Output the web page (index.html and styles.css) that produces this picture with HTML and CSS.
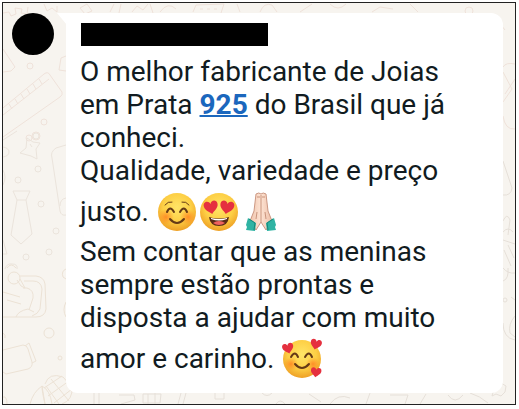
FILE: index.html
```html
<!DOCTYPE html>
<html lang="pt-br">
<head>
    <meta charset="UTF-8">
    <meta name="viewport" content="width=device-width, initial-scale=1">
    <title>Depoimento</title>
    <link rel="stylesheet" href="styles.css">
</head>
<body>
    <main class="chat">
        <!-- desenhos do papel de parede -->
        <svg class="fundo" viewBox="3 3 512 401" preserveAspectRatio="none" aria-hidden="true">
            <g class="rosado">
                <path d="M3 13l6-1 2 4 5-2-1-6 7 1-1 4 6 1 1-7M44 4l3 7 5-3 5 4v-6M3 49l12 18-4 4-8 1"/>
                <path d="M3 108L44 74q4-3 6 1l12 17q1 3-2 5L3 137M3 115l46-36M9 104l3 5M15 99l3 5M21 94l3 5M27 89l3 5M33 84l3 5M39 79l3 5"/>
                <circle cx="30" cy="66" r="3"/>
                <circle cx="44" cy="122" r="3"/>
                <circle cx="29" cy="138" r="3"/>
                <circle cx="36" cy="136" r="4"/>
                <path d="M66 56l-5 2-2 12 7 1"/>
                <path d="M80 8l7-4 5 7-7 3zM110 12l4-8M119 13l2-9M132 12l5-6 6 4 5-6M150 4l3 9M160 12q8-11 16-3"/>
                <path d="M193 12l3-7 28-1-3 9M200 9h3M207 9h3M214 9h3M240 12l-3-8M260 12q4-10 12-7l5 7M300 12l12-8M330 4q8 8 16 0M372 12l8-5 13 2M410 4l8 8"/>
                <circle cx="469" cy="11" r="4"/>
                <path d="M493 15l12 15M515 64q-9-2-12 3M503 72l9 17-9 13M515 79l-10 15M503 116q2 14 12 13"/>
            </g>
            <g>
                <path d="M3 140l14-9"/>
                <path d="M27 138l6 4 7 1-4 6 1 10-6-3-11-3 6-5zM30 144l2 3"/>
                <circle cx="36" cy="136" r="3"/>
                <path d="M3 147q6 1 6 5t-6 5M3 170q4 7 0 15"/>
                <circle cx="38" cy="169" r="3"/>
                <circle cx="18" cy="180" r="3"/>
                <circle cx="41" cy="204" r="3"/>
                <circle cx="56" cy="231" r="3"/>
                <circle cx="49" cy="252" r="3"/>
                <circle cx="26" cy="257" r="3"/>
                <path d="M13 191h17l-4 9 6 34-11 10-10-9 6-35zM17 200h9"/>
                <path d="M66 145l-10 3q-6 4-4 10l8 53q1 5 6 4M66 198q-6 1-6 8"/>
                <path d="M3 240l4 14H3M5 269q2-6 7-5 6 0 5 5"/>
            </g>
            <g class="amarelado">
                <circle cx="14" cy="278" r="6"/>
                <path d="M7 268q4-6 9 0M20 279l5 9-4-2-4-6M20 276h16q8 1 9 8l1 25q-1 8-10 8H3M24 281h9q8 0 9 8l-2 20q-2 5-8 7M23 288h4q7 2 6 10l-4 12M3 292l17 5M7 300l14 4M16 317q2-6 12-8l6 3"/>
                <circle cx="49" cy="333" r="5"/>
                <circle cx="60" cy="358" r="2"/>
                <path d="M66 269q-5 2-3 8l3 2M66 302q-4 8 0 15"/>
                <path d="M3 350l20-5q4 0 5 4l4 13q1 5-4 7l-22 5-3-2M25 346l4-3 7 18-4 2M3 333q3 2 2 5"/>
                <path d="M30 404q3-12 12-18l3 18M45 404q-3-12-3-18 8 4 10 18M45 384q4-12 18-7l9 10q1 13-10 17M44 388l18-12M48 396l21-15M54 403l18-14M51 379l18 22M46 386l13 18"/>
                <path d="M3 397q4-1 4 7"/>
            </g>
            <g class="cinza">
                <path d="M94 393v11M99 393v11M119 395h15l1 5-14 4M143 394h18l-1 9h-17zM148 394v10M155 393v11M181 393l-3 11M186 393l-3 11M215 393v6h9v-6M262 393q5 5 10 0M276 404q4-6 9 0"/>
                <path d="M309 394l12 8M330 404q8-11 20-6M370 393l-4 11M390 395h18l-3 9M420 404l6-10"/>
                <path d="M448 395q7 10 15 0M470 393q10 3 18 10M495 384l6-1 5 3-1 6-4 4-5-2-4 2 2-7"/>
                <path d="M503 161l9 27q-1 8-9 7M503 221q4-9 7-1l-2 15M503 232q5-6 10 0M503 240l12 4M504 250l7 16M508 245l6 13"/>
                <path d="M503 268q5 6 12 5M503 281q6-2 5-13"/>
                <circle cx="505" cy="300" r="2"/>
                <path d="M515 316q-7 8-5 17l5 4M503 323q0 15 12 17M515 300l-4-3"/>
            </g>
        </svg>

        <div class="avatar"></div>

        <article class="balao">
            <div class="nome"></div>
            <p>O melhor fabricante de Joias em Prata <a href="#">925</a> do Brasil que já conheci.</p>
            <p>Qualidade, variedade e preço justo.
                <svg class="emoji" viewBox="0 0 42 48" role="img" aria-label="Rosto sorridente">
                    <defs>
                        <radialGradient id="amarelo" cx="50%" cy="38%" r="62%">
                            <stop offset="0" stop-color="#ffe567"/>
                            <stop offset="0.6" stop-color="#fdcf45"/>
                            <stop offset="1" stop-color="#eea025"/>
                        </radialGradient>
                        <radialGradient id="bochecha">
                            <stop offset="0" stop-color="#ff7d20" stop-opacity="0.8"/>
                            <stop offset="1" stop-color="#ff8a20" stop-opacity="0"/>
                        </radialGradient>
                        <linearGradient id="pele">
                            <stop offset="0" stop-color="#f0c4ac"/>
                            <stop offset="0.5" stop-color="#fde3d3"/>
                            <stop offset="1" stop-color="#edbda5"/>
                        </linearGradient>
                        <path id="coracao" d="M0 7C-3 4-7 2-7-2C-7-7-1-7 0-3C1-7 7-7 7-2C7 2 3 4 0 7Z"/>
                    </defs>
                    <circle cx="21" cy="25" r="19" fill="url(#amarelo)"/>
                    <circle cx="10" cy="30" r="8" fill="url(#bochecha)"/>
                    <circle cx="32" cy="30" r="8" fill="url(#bochecha)"/>
                    <path class="traco" d="M11 25q3-7 7 0M24 25q4-7 7 0"/>
                    <path class="traco fino" d="M9 18q3-4 7-3M26 15q4-1 7 3"/>
                    <path class="traco" d="M14 32q7 8 14 0"/>
                </svg><svg class="emoji" viewBox="0 0 42 48" role="img" aria-label="Olhos de coração">
                    <circle cx="21" cy="25" r="19" fill="url(#amarelo)"/>
                    <use href="#coracao" class="vermelho" transform="translate(13 20) rotate(-10)"/>
                    <use href="#coracao" class="vermelho" transform="translate(29 20) rotate(10)"/>
                    <path d="M11 30q10 3 20 0-1 9-10 9t-10-9z" fill="#5b2b16"/>
                    <path d="M13 31q8 2 16 0v1q-8 3-16 0z" fill="#fff"/>
                    <path d="M15 36q6-4 12 0-6 4-12 0z" fill="#f0625f"/>
                </svg><svg class="emoji" viewBox="0 0 42 48" role="img" aria-label="Mãos juntas">
                    <path d="M16 7q3-2 5 0 2-2 5 0l2 17 4 10-6 9-5-8-5 8-6-9 4-10z" fill="url(#pele)" stroke="#cc9883" stroke-width="1"/>
                    <path d="M21 8v27M17 10h3M22 10h3M17 25l-1 7M25 25l1 7" fill="none" stroke="#c9947d" stroke-width="1"/>
                    <path d="M8 31l8 5-1 8-9-1 1-3-1-2z" fill="#2fb3a3"/>
                    <path d="M34 31l-8 5 1 8 9-1-1-3 1-2z" fill="#2fb3a3"/>
                    <path d="M9 32l6 4-1 7M33 32l-6 4 1 7" fill="none" stroke="#17877b" stroke-width="1"/>
                </svg>
            </p>
            <p>Sem contar que as meninas sempre estão prontas e disposta a ajudar com muito amor e carinho.
                <svg class="emoji" viewBox="0 0 42 48" role="img" aria-label="Rosto com corações">
                    <circle cx="21" cy="25" r="19" fill="url(#amarelo)"/>
                    <circle cx="10" cy="30" r="7" fill="url(#bochecha)"/>
                    <circle cx="32" cy="30" r="7" fill="url(#bochecha)"/>
                    <path class="traco" d="M10 23q4-7 7 0M24 23q4-7 7 0M14 30q7 8 14 0"/>
                    <use href="#coracao" class="vermelho" transform="translate(7 14) rotate(-14) scale(.8)"/>
                    <use href="#coracao" class="vermelho" transform="translate(35 10) rotate(14) scale(.8)"/>
                    <use href="#coracao" class="vermelho" transform="translate(35 38) rotate(8) scale(.75)"/>
                </svg>
            </p>
        </article>
    </main>
</body>
</html>
```
FILE: styles.css
```css
* {
    box-sizing: border-box;
}

body {
    margin: 2px 3px 4px 2px;
    background: #fff;
    color: #111b21;
    font-family: Roboto, "Liberation Sans", sans-serif;
}

.chat {
    position: relative;
    display: flex;
    align-items: flex-start;
    gap: 12px;
    padding: 10px 12px 11px 9px;
    background: #f7f4ef;
    border: 1px solid #222;
}

/* Papel de parede */
.fundo {
    position: absolute;
    top: 0;
    left: 0;
    width: 100%;
    height: 100%;
    fill: none;
    stroke: #ebe4dc;
    stroke-width: 1;
}

.rosado {
    stroke: #efe2da;
}

.amarelado {
    stroke: #ece2d5;
}

.cinza {
    stroke: #e6e0d9;
}

.avatar {
    position: relative;
    flex: none;
    width: 42px;
    height: 42px;
    border-radius: 50%;
    background: #000;
}

.balao {
    position: relative;
    flex: 1;
    min-width: 0;
    padding: 10px 40px 11px 14px;
    background: #fff;
    border-radius: 0 12px 12px 12px;
    font-size: 28px;
    line-height: 33px;
}

/* Pontinha do balão */
.balao::before {
    content: "";
    position: absolute;
    top: 0;
    left: -9px;
    width: 10px;
    height: 12px;
    background: #fff;
    clip-path: polygon(0 0, 100% 0, 100% 100%);
}

.balao p {
    margin: 0;
}

.balao a {
    color: #1b67bd;
    font-weight: 700;
    text-decoration-thickness: 2px;
}

.nome {
    width: 187px;
    height: 23px;
    margin: 0 0 9px 1px;
    background: #000;
}

.emoji {
    width: 42px;
    height: 48px;
    vertical-align: -14px;
}

.traco {
    fill: none;
    stroke: #653a16;
    stroke-width: 2;
    stroke-linecap: round;
}

.fino {
    stroke-width: 1;
}

.vermelho {
    fill: #e5303f;
}
```
